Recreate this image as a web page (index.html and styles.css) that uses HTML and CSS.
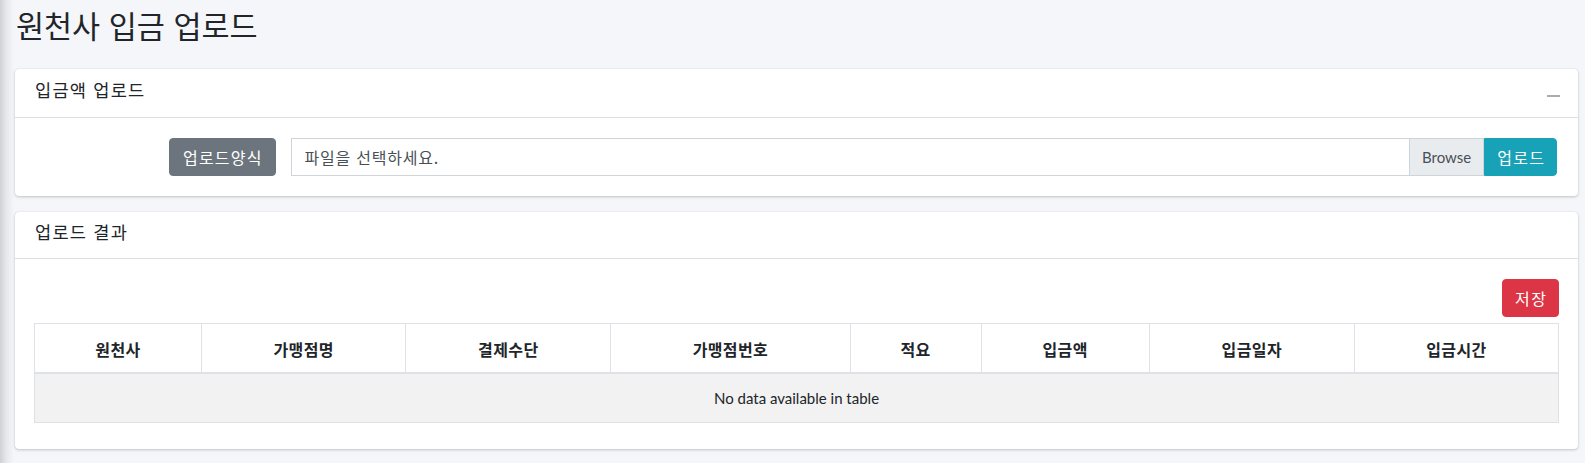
FILE: index.html
```html
<!DOCTYPE html>
<html lang="ko">
<head>
<meta charset="utf-8">
<title>원천사 입금 업로드</title>
<link rel="stylesheet" href="styles.css">
</head>
<body>
<div class="page">
  <h1 class="page-title">원천사 입금 업로드</h1>

  <section class="card">
    <div class="card-header header-tall">
      <h3 class="card-title">입금액 업로드</h3>
      <button class="btn-tool" type="button" aria-label="collapse"><span class="minus"></span></button>
    </div>
    <div class="card-body upload-row">
      <button class="btn btn-secondary" type="button">업로드양식</button>
      <div class="input-group">
        <div class="file-input">파일을 선택하세요.</div>
        <span class="browse">Browse</span>
        <button class="btn btn-info btn-attached" type="button">업로드</button>
      </div>
    </div>
  </section>

  <section class="card">
    <div class="card-header header-short">
      <h3 class="card-title">업로드 결과</h3>
    </div>
    <div class="card-body">
      <div class="toolbar">
        <button class="btn btn-danger" type="button">저장</button>
      </div>
      <table class="data-table">
        <colgroup>
          <col class="c1"><col class="c2"><col class="c3"><col class="c4">
          <col class="c5"><col class="c6"><col class="c7"><col class="c8">
        </colgroup>
        <thead>
          <tr>
            <th>원천사</th><th>가맹점명</th><th>결제수단</th><th>가맹점번호</th>
            <th>적요</th><th>입금액</th><th>입금일자</th><th>입금시간</th>
          </tr>
        </thead>
        <tbody>
          <tr class="odd"><td colspan="8" class="empty">No data available in table</td></tr>
        </tbody>
      </table>
    </div>
  </section>
</div>
</body>
</html>
```

FILE: styles.css
```css
html, body {
  margin: 0;
  padding: 0;
}
body {
  background: #f4f6f9 linear-gradient(to right, #cfd0d3 0, #e6e7ea 6px, #f4f6f9 14px) no-repeat;
  background-size: 14px 100%;
  min-height: 463px;
  font-family: "Lato", "Noto Sans CJK KR", sans-serif;
  color: #212529;
  font-size: 16px;
  line-height: 1.5;
}
.page {
  padding: 0 7px 0 15px;
}
.page-title {
  margin: 0;
  padding: 7px 0 0 1px;
  height: 69px;
  box-sizing: border-box;
  font-size: 30.5px;
  font-weight: 400;
  line-height: 1.2;
  font-family: "Noto Sans CJK KR", sans-serif;
}
.card {
  background: #fff;
  border-radius: 4px;
  box-shadow: 0 0 1px rgba(0,0,0,.125), 0 1px 3px rgba(0,0,0,.2);
  margin-bottom: 16px;
}
.card-header {
  display: flex;
  align-items: center;
  justify-content: space-between;
  height: 48px;
  box-sizing: border-box;
  padding: 0 20px;
  border-bottom: 1px solid rgba(0,0,0,.125);
}
.header-tall {
  height: 49px;
}
.header-short {
  height: 47px;
}
.card-title {
  margin: 0;
  font-size: 17.6px;
  font-weight: 400;
  letter-spacing: 1.2px;
  font-family: "Noto Sans CJK KR", sans-serif;
  line-height: 1.5;
  position: relative;
  top: -3px;
}
.btn-tool {
  background: none;
  border: 0;
  padding: 4px 0;
  margin-right: -2px;
  display: flex;
  align-items: center;
}
.minus {
  display: block;
  width: 13px;
  height: 2px;
  background: #a4acb4;
  position: relative;
  top: 3px;
}
.card-body {
  padding: 20px;
}
.upload-row {
  display: flex;
  align-items: center;
  padding-left: 154px;
  padding-right: 21px;
  gap: 15px;
}
.btn {
  font-family: "Noto Sans CJK KR", sans-serif;
  font-size: 16px;
  line-height: 24px;
  padding: 6px 12px;
  border: 1px solid transparent;
  border-radius: 4px;
  color: #fff;
  cursor: pointer;
}
.btn-secondary {
  background: #6c757d;
  border-color: #6c757d;
  letter-spacing: 1.2px;
  padding-left: 13px;
  padding-right: 12.8px;
}
.btn-info {
  background: #17a2b8;
  border-color: #17a2b8;
  letter-spacing: 1.3px;
  padding-right: 10.7px;
}
.btn-danger {
  background: #dc3545;
  border-color: #dc3545;
  letter-spacing: 1.5px;
  padding-right: 10.5px;
}
.input-group {
  flex: 1;
  display: flex;
  height: 38px;
}
.file-input {
  flex: 1;
  border: 1px solid #ced4da;
  border-right: 0;
  padding: 6px 12px;
  line-height: 24px;
  color: #495057;
  font-family: "Noto Sans CJK KR", sans-serif;
  font-size: 16px;
  letter-spacing: 0.8px;
}
.browse {
  background: #e9ecef;
  border: 1px solid #ced4da;
  padding: 6px 12px;
  line-height: 24px;
  color: #495057;
  font-size: 15px;
}
.btn-attached {
  border-radius: 0 4px 4px 0;
}
.toolbar {
  display: flex;
  justify-content: flex-end;
  margin-right: -1px;
}
.data-table {
  width: calc(100% + 2px);
  margin: 6px -1px;
  border-collapse: collapse;
  table-layout: fixed;
}
.c1 { width: 167px; }
.c2 { width: 204px; }
.c3 { width: 205px; }
.c4 { width: 239px; }
.c5 { width: 131px; }
.c6 { width: 168px; }
.c7 { width: 205px; }
.c8 { width: 204px; }
.data-table th,
.data-table td {
  border: 1px solid #dee2e6;
  padding: 12px;
  text-align: center;
  line-height: 24px;
}
.data-table th {
  font-family: "Noto Sans CJK KR", sans-serif;
  font-weight: 700;
  font-size: 16px;
  letter-spacing: 0.4px;
  border-bottom-width: 2px;
  padding-top: 13px;
  padding-bottom: 11px;
}
.data-table tr.odd td {
  background: #f2f2f2;
}
.empty {
  font-size: 15px;
  color: #212529;
}
```
